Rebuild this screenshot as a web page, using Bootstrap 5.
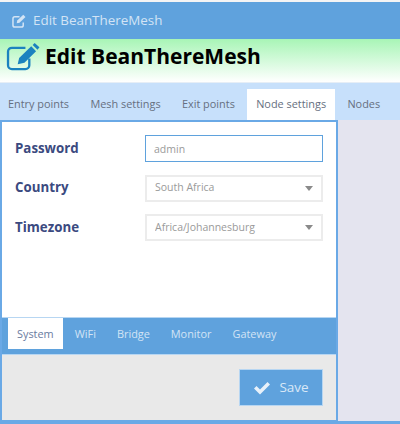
<!DOCTYPE html>
<html lang="en">
<head>
    <meta charset="UTF-8">
    <meta name="viewport" content="width=device-width, initial-scale=1.0">
    <title>Edit BeanThereMesh</title>
    <link href="https://cdn.jsdelivr.net/npm/bootstrap@5.3.0/dist/css/bootstrap.min.css" rel="stylesheet">
    <style>
        html, body {
            width: 400px;
            height: 424px;
            overflow: hidden;
        }
        body {
            font-family: "Open Sans", sans-serif;
            font-size: 11px;
            background-color: #e4e4ef;
        }
        .top-strip { height: 2px; background-color: #f4f4f4; }
        .win-title {
            height: 37px;
            padding-left: 12px;
            background-color: #5fa2dd;
            color: #d3e4f5;
            font-size: 13.4px;
            gap: 6px;
        }
        .page-head {
            height: 43px;
            padding: 0 0 8px 6px;
            background: linear-gradient(#a8f5b6, #ffffff);
        }
        .page-head h1 {
            margin: 0;
            font-family: "Open Sans", sans-serif;
            font-size: 21px;
            font-weight: 700;
            color: #000;
        }
        .main-tabs {
            height: 38px;
            padding-top: 6px;
            background-color: #c7e0fb;
            border-top: 1px solid #e6eef6;
        }
        .main-tabs .nav-item + .nav-item { margin-left: 3.3px; }
        .main-tabs .nav-item:first-child .nav-link { padding-left: 8px; }
        .main-tabs .nav-link, .sub-tabs .nav-link {
            border-radius: 0;
            border: 0;
            font-size: 10.9px;
            line-height: 30px;
            padding: 0 9px;
        }
        .main-tabs .nav-link { color: #666f80; height: 31px; }
        .main-tabs .nav-link.active { background-color: #fff; color: #666f80; }
        .edit-panel {
            width: 338px;
            height: 301px;
            border: 2px solid #6aa9e6;
            border-bottom-width: 1px;
            background-color: #fff;
        }
        .form-area { padding: 7px 13px 0 13px; }
        .form-line { height: 39.5px; }
        .form-line label {
            width: 130px;
            font-size: 13.3px;
            font-weight: 700;
            color: #3b4a80;
        }
        .form-line .form-control, .form-line .form-select {
            width: 178px;
            height: 27px;
            padding: 0 8px;
            border-radius: 0;
            border: 2px solid #ececec;
            font-size: 10.5px;
            color: #9a9a9a;
            box-shadow: none;
        }
        .form-line .form-control { border-color: #5fa2dd; border-width: 1px; }
        .form-line .form-select { background-image: none; }
        .select-wrap { position: relative; }
        .select-arrow {
            position: absolute;
            right: 10px;
            top: 11px;
            border-left: 4px solid transparent;
            border-right: 4px solid transparent;
            border-top: 5px solid #8a8a8a;
        }
        .sub-tabs {
            height: 37px;
            padding: 0 0 0 6px;
            background-color: #5fa2dd;
            border-top: 1px solid #b7d6f2;
        }
        .sub-tabs .nav-item + .nav-item { margin-left: 3px; }
        .sub-tabs .nav-link { color: #d3e4f5; height: 31px; line-height: 32px; }
        .sub-tabs .nav-link.active { background-color: #fff; color: #6a7ca0; }
        .foot-area {
            height: 66px;
            padding: 14px 13px 0 0;
            background-color: #e9e9e9;
            border-top: 1px solid #b7d6f2;
        }
        .save-btn {
            width: 84px;
            height: 37px;
            padding: 0;
            border-radius: 0;
            border: 1px solid #b7d6f2;
            background-color: #5fa2dd;
            color: #d9e8f7;
            font-size: 13.5px;
        }
        .bottom-strip { height: 3px; background-color: #6aa9e6; }
    </style>
</head>
<body>
    <div class="top-strip"></div>
    <div class="win-title d-flex align-items-center">
        <svg width="15" height="14" viewBox="0 0 16 15" fill="none">
            <path d="M12 9v3a2 2 0 0 1-2 2H3a2 2 0 0 1-2-2V5a2 2 0 0 1 2-2h5" stroke="#d3e4f5" stroke-width="1.6"/>
            <path d="M5 10l.6-3L12 .8l2.400 2.400L8 9.400z" fill="#d3e4f5"/>
        </svg>
        <span>Edit BeanThereMesh</span>
    </div>
    <div class="page-head d-flex align-items-center gap-1">
        <svg width="35" height="29" viewBox="0 0 36 30" fill="none">
            <path d="M24 17v7a4 4 0 0 1-4 4H6a4 4 0 0 1-4-4V10a4 4 0 0 1 4-4h14" stroke="#1b82bf" stroke-width="2.4"/>
            <path d="M12 23l1.500-6.500L26 4.500l5 5L19 21.500z" fill="#1b82bf"/>
            <path d="M27.500 3l2-2 5 4.500-2 2.500z" fill="#1b82bf"/>
        </svg>
        <h1>Edit BeanThereMesh</h1>
    </div>
    <ul class="nav main-tabs">
        <li class="nav-item"><a class="nav-link" href="#">Entry points</a></li>
        <li class="nav-item"><a class="nav-link" href="#">Mesh settings</a></li>
        <li class="nav-item"><a class="nav-link" href="#">Exit points</a></li>
        <li class="nav-item"><a class="nav-link active" href="#">Node settings</a></li>
        <li class="nav-item"><a class="nav-link" href="#">Nodes</a></li>
    </ul>
    <div class="edit-panel d-flex flex-column">
        <form class="form-area flex-grow-1">
            <div class="form-line d-flex align-items-center">
                <label for="nodePassword">Password</label>
                <input type="text" class="form-control" id="nodePassword" value="admin">
            </div>
            <div class="form-line d-flex align-items-center">
                <label for="nodeCountry">Country</label>
                <div class="select-wrap">
                    <select class="form-select" id="nodeCountry"><option>South Africa</option></select>
                    <span class="select-arrow"></span>
                </div>
            </div>
            <div class="form-line d-flex align-items-center">
                <label for="nodeTimezone">Timezone</label>
                <div class="select-wrap">
                    <select class="form-select" id="nodeTimezone"><option>Africa/Johannesburg</option></select>
                    <span class="select-arrow"></span>
                </div>
            </div>
        </form>
        <ul class="nav sub-tabs">
            <li class="nav-item"><a class="nav-link active" href="#">System</a></li>
            <li class="nav-item"><a class="nav-link" href="#">WiFi</a></li>
            <li class="nav-item"><a class="nav-link" href="#">Bridge</a></li>
            <li class="nav-item"><a class="nav-link" href="#">Monitor</a></li>
            <li class="nav-item"><a class="nav-link" href="#">Gateway</a></li>
        </ul>
        <div class="foot-area d-flex justify-content-end">
            <button type="button" class="btn save-btn d-flex align-items-center justify-content-center gap-2">
                <svg width="18" height="14" viewBox="0 0 18 14"><path d="M1 7.500l2.500-2.500 3.500 3.500L14.500 1 17 3.500 7 13.500z" fill="#e8f1fa"/></svg>
                <span>Save</span>
            </button>
        </div>
    </div>
    <div class="bottom-strip"></div>
</body>
</html>
